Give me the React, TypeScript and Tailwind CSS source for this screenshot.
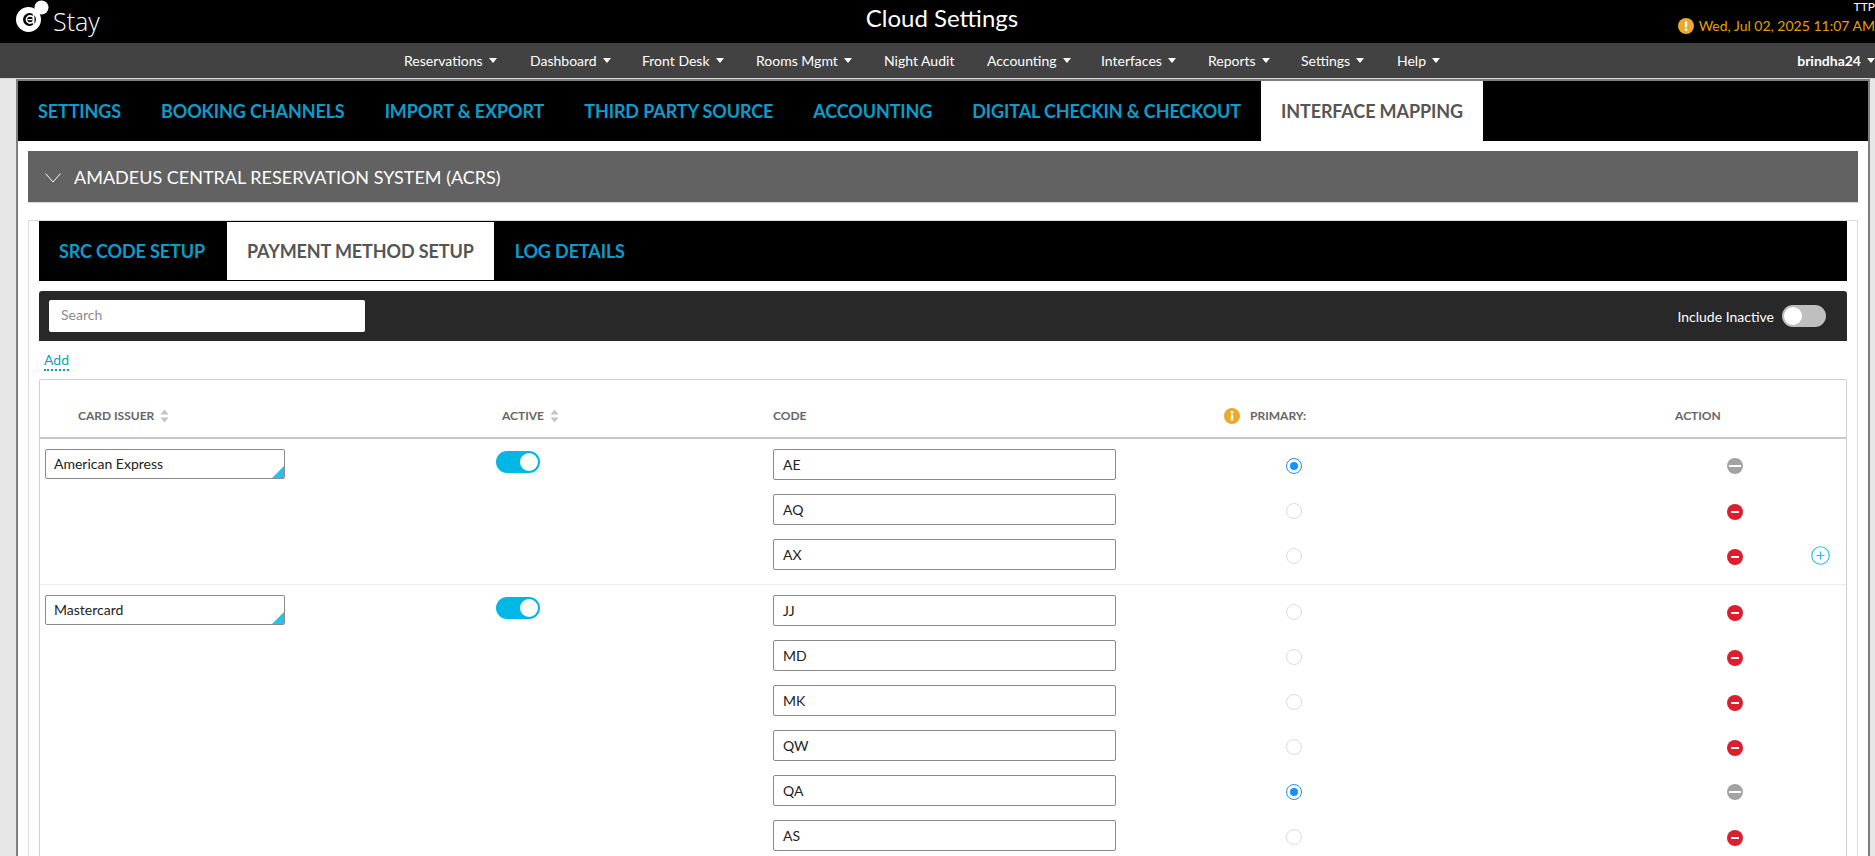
import React from "react";

const navItems = [
  { label: "Reservations", width: "w-[126px]" },
  { label: "Dashboard", width: "w-[112px]" },
  { label: "Front Desk", width: "w-[114px]" },
  { label: "Rooms Mgmt", width: "w-[128px]" },
  { label: "Night Audit", width: "w-[103px]", noCaret: true },
  { label: "Accounting", width: "w-[114px]" },
  { label: "Interfaces", width: "w-[107px]" },
  { label: "Reports", width: "w-[93px]" },
  { label: "Settings", width: "w-[96px]" },
  { label: "Help", width: "w-auto" },
];

const mainTabs = [
  "SETTINGS",
  "BOOKING CHANNELS",
  "IMPORT & EXPORT",
  "THIRD PARTY SOURCE",
  "ACCOUNTING",
  "DIGITAL CHECKIN & CHECKOUT",
  "INTERFACE MAPPING",
];

const groups = [
  {
    issuer: "American Express",
    codes: [
      { code: "AE", primary: true },
      { code: "AQ" },
      { code: "AX", add: true },
    ],
  },
  {
    issuer: "Mastercard",
    codes: [
      { code: "JJ" },
      { code: "MD" },
      { code: "MK" },
      { code: "QW" },
      { code: "QA", primary: true },
      { code: "AS" },
    ],
  },
];

function Caret({ className = "border-t-white" }: { className?: string }) {
  return (
    <span
      className={`inline-block w-0 h-0 border-x-[4px] border-x-transparent border-t-[5px] ${className}`}
    />
  );
}

function SortIcon() {
  return (
    <svg width="9" height="14" viewBox="0 0 9 14" className="ml-[6px]">
      <path d="M4.5 0.5 L8.5 5.5 H0.5 Z" fill="#c4c4c4" />
      <path d="M4.5 13.5 L8.5 8.5 H0.5 Z" fill="#c4c4c4" />
    </svg>
  );
}

function Logo() {
  return (
    <div className="flex items-start">
      <svg width="39" height="34" viewBox="0 0 39 34">
        <circle cx="27.5" cy="7.5" r="7" fill="#fff" />
        <circle cx="14.5" cy="19.5" r="12.5" fill="#fff" />
        <circle cx="15.5" cy="19.5" r="6.5" fill="#000" />
        <circle cx="16" cy="19.5" r="3.6" fill="none" stroke="#fff" strokeWidth="1.6" />
        <rect x="18.7" y="13.5" width="1.7" height="11" fill="#fff" />
        <rect x="13.5" y="19" width="5" height="1.2" fill="#fff" />
      </svg>
      <span className="text-[25px] leading-none font-light text-white font-['Open_Sans',sans-serif] mt-[9px]">Stay</span>
    </div>
  );
}

function Toggle({ on }: { on?: boolean }) {
  return (
    <div
      className={`w-[44px] h-[22px] rounded-full p-[2px] flex ${
        on ? "bg-[#00b8e3] justify-end" : "bg-[#bfbfbf] justify-start"
      }`}
    >
      <div className="w-[18px] h-[18px] rounded-full bg-white" />
    </div>
  );
}

function Radio({ checked }: { checked?: boolean }) {
  return (
    <div
      className={`w-4 h-4 rounded-full border flex items-center justify-center bg-white ${
        checked ? "border-[#1890ff]" : "border-[#dcdcdc]"
      }`}
    >
      {checked && <div className="w-2 h-2 rounded-full bg-[#1890ff]" />}
    </div>
  );
}

function MinusIcon({ disabled }: { disabled?: boolean }) {
  return (
    <div
      className={`w-4 h-4 rounded-full flex items-center justify-center ${
        disabled ? "bg-[#a3a3a3]" : "bg-[#dc1f2e]"
      }`}
    >
      <div className={`h-[2px] bg-white ${disabled ? "w-3" : "w-2"}`} />
    </div>
  );
}

function PlusIcon() {
  return (
    <svg width="19" height="19" viewBox="0 0 19 19" fill="none" stroke="#29bfe6">
      <circle cx="9.5" cy="9.5" r="8.75" strokeWidth="1.2" />
      <path d="M9.5 5.5v8M5.5 9.5h8" strokeWidth="1.2" />
    </svg>
  );
}

function CodeRow({ code, primary, add }: { code: string; primary?: boolean; add?: boolean }) {
  return (
    <div className="flex items-center">
      <div className="w-[343px] h-[31px] border border-[#8a8a8a] rounded-[2px] pl-[9px] flex items-center text-[14px] text-[#222]">
        {code}
      </div>
      <div className="ml-[170px] mt-[2px]">
        <Radio checked={primary} />
      </div>
      <div className={`ml-[425px] ${primary ? "mt-[2px]" : "mt-[4px]"}`}>
        <MinusIcon disabled={primary} />
      </div>
      {add && (
        <div className="ml-[68px] mt-[2px]">
          <PlusIcon />
        </div>
      )}
    </div>
  );
}

export default function App() {
  return (
    <div className="w-[1875px] h-[856px] overflow-hidden bg-[#e6e6e6] font-['Lato',sans-serif] flex flex-col">
      {/* top bar */}
      <header className="h-[43px] bg-black text-white grid grid-cols-[1fr_auto_1fr] pl-[9px] shrink-0">
        <div className="pl-[5px]">
          <Logo />
        </div>
        <div className="text-[24px] leading-none pt-[6px]">Cloud Settings</div>
        <div className="flex flex-col items-end">
          <div className="text-[12px] leading-[12px] pt-px">TTP</div>
          <div className="flex items-center gap-[5px] text-[14px] leading-none text-[#e5a100] mt-[5px]">
            <svg width="16" height="16" viewBox="0 0 16 16">
              <circle cx="8" cy="8" r="8" fill="#eba92d" />
              <rect x="6.8" y="3" width="2.4" height="6.6" rx="1" fill="#fff" />
              <circle cx="8" cy="11.8" r="1.4" fill="#fff" />
            </svg>
            Wed, Jul 02, 2025 11:07 AM
          </div>
        </div>
      </header>

      {/* nav */}
      <nav className="h-[35px] bg-[#424242] text-white text-[14px] flex items-center shrink-0">
        <div className="flex items-center pl-[404px]">
          {navItems.map((item) => (
            <div key={item.label} className={`flex items-center gap-[6px] ${item.width}`}>
              <span>{item.label}</span>
              {!item.noCaret && <Caret />}
            </div>
          ))}
        </div>
        <div className="ml-auto flex items-center gap-[6px] font-bold">
          brindha24
          <Caret />
        </div>
      </nav>
      <div className="h-px bg-[#d8d8d8] shrink-0" />

      {/* page */}
      <div className="flex-1 min-h-0 pl-4 pr-[5px]">
        <div className="h-full bg-white border-x-2 border-t-2 border-[#7f7f7f] overflow-hidden">
          <div className="bg-black h-[60px] flex">
            {mainTabs.map((tab) => (
              <div
                key={tab}
                className={`px-5 pt-px flex items-center text-[18px] font-bold tracking-[-0.12px] ${
                  tab === "INTERFACE MAPPING" ? "bg-white text-[#555]" : "text-[#0a9dcb]"
                }`}
              >
                {tab}
              </div>
            ))}
          </div>

          <div className="px-[10px] pt-[10px]">
            <div className="h-[52px] bg-[#626262] border-b border-[#d8d8d8] flex items-center text-white text-[18px] pl-[17px] pt-[2px] gap-[13px]">
              <svg width="16" height="10" viewBox="0 0 16 10" fill="none" stroke="#fff" strokeWidth="1">
                <path d="M0.5 0.5 L8 9 L15.5 0.5" />
              </svg>
              <span>AMADEUS CENTRAL RESERVATION SYSTEM (ACRS)</span>
            </div>

            <div className="mt-[17px] border border-[#dcdcdc] px-[10px] pt-0">
              {/* sub tabs */}
              <div className="bg-black h-[60px] flex items-stretch py-px">
                <div className="px-5 pt-px flex items-center text-[18px] font-bold tracking-[-0.12px] text-[#0a9dcb] w-[188px] whitespace-nowrap">
                  SRC CODE SETUP
                </div>
                <div className="px-5 pt-px flex items-center text-[18px] font-bold tracking-[-0.12px] text-[#555] bg-white">
                  PAYMENT METHOD SETUP
                </div>
                <div className="px-5 pt-px ml-px flex items-center text-[18px] font-bold tracking-[-0.12px] text-[#0a9dcb]">
                  LOG DETAILS
                </div>
              </div>

              {/* toolbar */}
              <div className="mt-[10px] h-[50px] bg-[#282828] rounded-t-[3px] flex items-center justify-between pl-[10px] pr-[21px]">
                <div className="w-[316px] h-[32px] bg-white rounded-[2px] flex items-center pl-3 pb-[4px] text-[14px] text-[#8c8c8c]">
                  Search
                </div>
                <div className="flex items-center gap-2 text-white text-[14px]">
                  Include Inactive
                  <Toggle />
                </div>
              </div>

              <div className="h-[38px] pt-[10px] pl-[5px] leading-none">
                <span className="text-[14px] text-[#0a9dcb] border-b-2 border-dotted border-[#0a9dcb] pb-[1px]">Add</span>
              </div>

              {/* table */}
              <div className="border border-[#d0d0d0] rounded-t-[2px]">
                <div className="h-[59px] pt-[14px] border-b-2 border-[#c8c8c8] grid grid-cols-[456px_277px_451px_1fr] items-center text-[12px] font-bold text-[#666]">
                  <div className="flex items-center pl-[38px]">
                    CARD ISSUER
                    <SortIcon />
                  </div>
                  <div className="flex items-center pl-[6px]">
                    ACTIVE
                    <SortIcon />
                  </div>
                  <div>CODE</div>
                  <div className="flex items-center gap-[10px]">
                    <svg width="16" height="16" viewBox="0 0 16 16">
                      <circle cx="8" cy="8" r="8" fill="#eba92d" />
                      <circle cx="8" cy="4.3" r="1.4" fill="#fff" />
                      <rect x="6.8" y="6.6" width="2.4" height="6" rx="0.5" fill="#fff" />
                    </svg>
                    <span>PRIMARY:</span>
                    <span className="ml-[359px]">ACTION</span>
                  </div>
                </div>

                {groups.map((group) => (
                  <div
                    key={group.issuer}
                    className="grid grid-cols-[456px_277px_1fr] pt-[10px] pb-[14px] border-b border-[#ececec]"
                  >
                    <div className="pl-[5px]">
                      <div className="relative w-[240px] h-[30px] border border-[#8a8a8a] rounded-[2px] flex items-center pl-2 pb-px text-[14px] text-[#222] overflow-hidden">
                        {group.issuer}
                        <div className="absolute right-0 bottom-0 w-0 h-0 border-l-[12px] border-l-transparent border-b-[12px] border-b-[#29bfe6]" />
                      </div>
                    </div>
                    <div className="pt-[2px]">
                      <Toggle on />
                    </div>
                    <div className="flex flex-col gap-[14px]">
                      {group.codes.map((c) => (
                        <CodeRow key={c.code} {...c} />
                      ))}
                    </div>
                  </div>
                ))}
              </div>
            </div>
          </div>
        </div>
      </div>
    </div>
  );
}
